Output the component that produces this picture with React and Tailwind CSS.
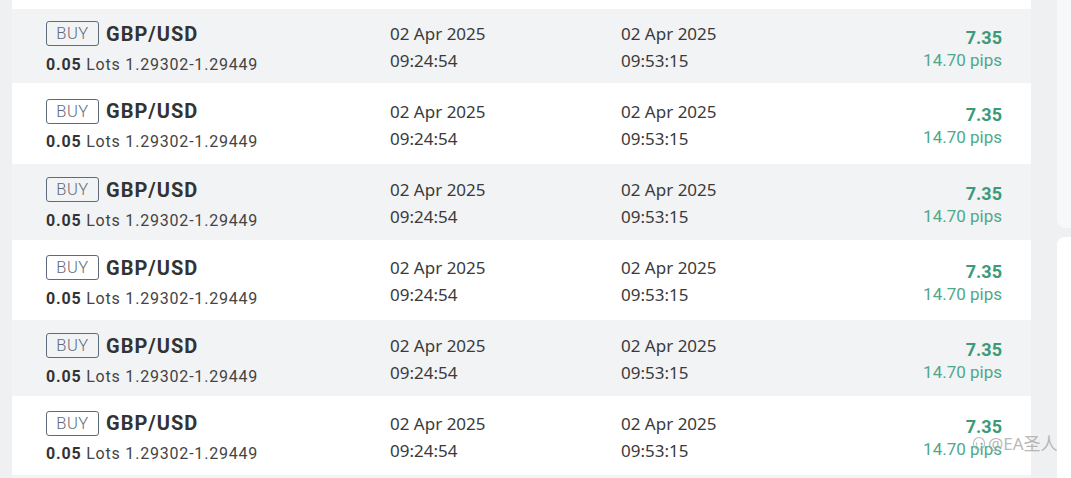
import React from 'react';

const rows = [
  { h: 'h-[74px]', bg: 'bg-[#f2f3f5]' },
  { h: 'h-[81px]', bg: 'bg-white' },
  { h: 'h-[76px]', bg: 'bg-[#f2f3f5]' },
  { h: 'h-[80px]', bg: 'bg-white' },
  { h: 'h-[76px]', bg: 'bg-[#f2f3f5]' },
  { h: 'h-[79px]', bg: 'bg-white' },
];

function TradeRow({ h, bg }) {
  return (
    <div className={`${h} ${bg} flex items-center pl-[34px] pr-[29px] text-[#333]`}>
      {/* Symbol + lots */}
      <div className="w-[344px] flex flex-col pt-[5px]">
        <div className="flex items-center gap-[7px]">
          <span className="h-[25px] w-[53px] text-center border border-[#5f6b7a] rounded-[3px] text-[#5f6b7a] text-[16.5px] leading-[23px] font-['Roboto',sans-serif] font-light tracking-[0.6px]">
            BUY
          </span>
          <span className="text-[20px] font-bold font-['Roboto',sans-serif] leading-[26px] tracking-[1px]">GBP/USD</span>
        </div>
        <div className="mt-[6px] text-[16px] leading-[24px] font-['Roboto',sans-serif] text-[#444] tracking-[0.8px]">
          <span className="font-bold text-[#333]">0.05</span> Lots 1.29302-1.29449
        </div>
      </div>
      {/* Open time */}
      <div className="w-[231px] flex flex-col pt-[2px] text-[17px] leading-[27px] font-['Noto_Sans',sans-serif] text-[#3a3a3a]">
        <span>02 Apr 2025</span>
        <span>09:24:54</span>
      </div>
      {/* Close time */}
      <div className="w-[231px] flex flex-col pt-[2px] text-[17px] leading-[27px] font-['Noto_Sans',sans-serif] text-[#3a3a3a]">
        <span>02 Apr 2025</span>
        <span>09:53:15</span>
      </div>
      {/* Profit */}
      <div className="flex-1 flex flex-col items-end font-['Roboto',sans-serif]">
        <span className="text-[18px] leading-[22px] font-bold text-[#3b9a78] mt-[5px]">7.35</span>
        <span className="text-[17px] leading-[22px] text-[#4fa88a]">14.70 pips</span>
      </div>
    </div>
  );
}

export default function App() {
  return (
    <div className="w-[1071px] h-[478px] overflow-hidden flex bg-[#eff0f2] relative">
      <div className="w-[12px] bg-[#eff0f2]" />
      <div className="w-[1019px] flex flex-col">
        <div className="h-[9px] bg-white" />
        {rows.map((r, i) => (
          <TradeRow key={i} h={r.h} bg={r.bg} />
        ))}
        <div className="flex-1 bg-[#f2f3f5]" />
      </div>
      <div className="w-[26px] bg-[#eff0f2]" />
      <div className="flex-1 flex flex-col gap-[9px]">
        <div className="h-[228px] bg-[#f7f8f9] rounded-bl-[8px]" />
        <div className="flex-1 bg-white rounded-tl-[8px]" />
      </div>

      {/* watermark */}
      <div className="absolute left-[972px] top-[431px] flex items-center gap-[2px] text-[#a8a8a8] opacity-80 font-['Noto_Sans','Noto_Sans_CJK_SC',sans-serif] text-[17px]">
        <svg width="14" height="16" viewBox="0 0 14 16" fill="none" stroke="#b0b0b0" strokeWidth="1.2">
          <path d="M7 1.5a5.5 6 0 1 0 0.01 0" />
          <path d="M4.5 6.5v3M9.5 6.5v3" />
        </svg>
        <span>@EA圣人</span>
      </div>
    </div>
  );
}
